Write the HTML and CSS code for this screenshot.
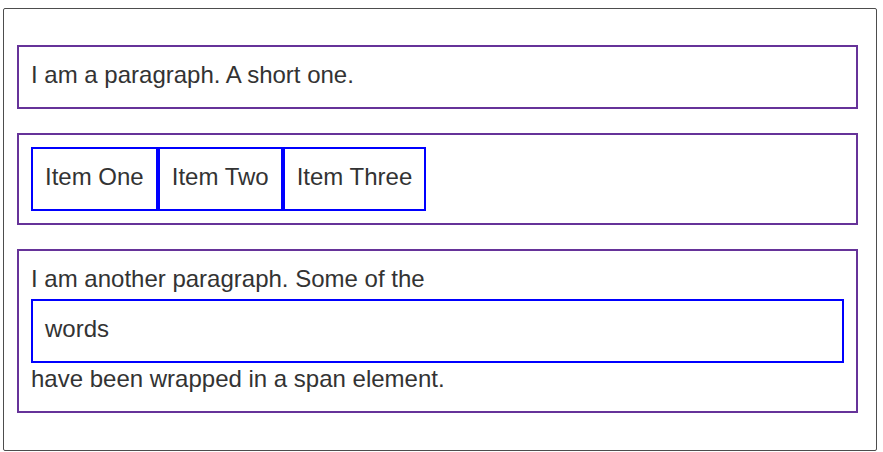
FILE: index.html
```html
<!DOCTYPE html>
<html>
<head>
<meta charset="utf-8">
<link rel="stylesheet" href="styles.css">
</head>
<body>
<div class="frame">
  <p class="box">I am a paragraph. A short one.</p>
  <ul class="box list">
    <li class="item">Item One</li>
    <li class="item">Item Two</li>
    <li class="item">Item Three</li>
  </ul>
  <p class="box">I am another paragraph. Some of the <span class="item block">words</span> have been wrapped in a span element.</p>
</div>
</body>
</html>
```
FILE: styles.css
```css
html, body {
  margin: 0;
  padding: 0;
  background: #fff;
}
body {
  font-family: "Liberation Sans", Arial, sans-serif;
  font-size: 24px;
  line-height: 1.5;
  color: #333;
}
.frame {
  margin: 8px 6px 0 3px;
  border: 1px solid #4d4d4d;
  border-radius: 2px;
  padding: 36px 18px 36px 13px;
  display: flex;
  flex-direction: column;
  gap: 24px;
  box-sizing: border-box;
  height: 443px;
}
.box {
  margin: 0;
  border: 2px solid rebeccapurple;
  padding: 10px 12px 14px;
}
.list {
  list-style: none;
  display: flex;
  padding: 12px;
}
.item {
  border: 2px solid blue;
  padding: 10px 12px 14px;
}
.block {
  display: block;
  margin: 2px 0 -2px;
}
```
